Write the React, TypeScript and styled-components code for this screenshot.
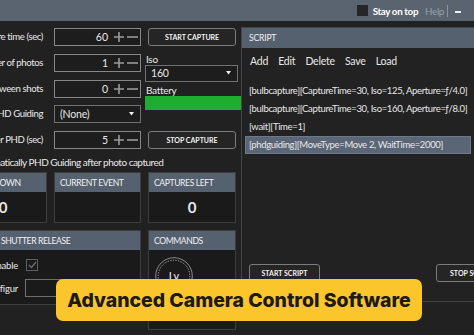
import styled, { createGlobalStyle } from 'styled-components';

const GlobalStyle = createGlobalStyle`
  html, body {
    margin: 0;
    padding: 0;
    background: #212121;
    overflow: hidden;
  }
  body {
    font-family: Lato, 'Open Sans', sans-serif;
    color: #e8e8e8;
  }
`;

const Window = styled.div`
  position: relative;
  width: 474px;
  height: 335px;
  overflow: hidden;
  background: #212121;
`;

const TitleBar = styled.div`
  height: 21px;
  background: #5a6470;
  display: flex;
  align-items: center;
  justify-content: flex-end;
  padding-right: 13px;
  font-size: 9.8px;
  letter-spacing: -0.35px;
`;

const TitleCheck = styled.span`
  width: 11px;
  height: 11px;
  background: #262626;
  margin-right: 5px;
`;

const StayText = styled.span`
  color: #ffffff;
  font-weight: 700;
  margin-right: 7px;
`;

const HelpText = styled.span`
  color: #949ea9;
`;

const Separator = styled.span`
  width: 1px;
  height: 12px;
  background: #8a949f;
  margin: 0 7px 0 3px;
`;

const Minimize = styled.span`
  width: 6px;
  height: 2px;
  background: #f0f0f0;
  margin-top: 2px;
`;

const Body = styled.div`
  display: flex;
  align-items: flex-start;
  padding-top: 6px;
`;

const LeftPane = styled.div`
  flex: none;
  width: 277px;
  margin-left: -41px;
  padding-top: 1px;
  display: flex;
  flex-direction: column;
`;

const FormGrid = styled.div`
  display: grid;
  grid-template-columns: 88px 87px 88px;
  grid-template-rows: repeat(5, 18px);
  column-gap: 7px;
  row-gap: 7.8px;
`;

const FieldLabel = styled.div`
  grid-column: 1;
  display: flex;
  justify-content: flex-end;
  padding-right: 4px;
  font-size: 9.6px;
  letter-spacing: -0.4px;
  line-height: 18px;
  white-space: nowrap;
`;

const NumberBox = styled.div`
  display: flex;
  align-items: center;
  border: 1px solid #868686;
  background: #1d1d1d;
  padding: 0 2px 0 6px;
`;

const NumberValue = styled.span`
  flex: 1;
  text-align: right;
  font-size: 10.5px;
  margin-right: 6px;
`;

const StepIcons = styled.span`
  display: flex;
  align-items: center;
  gap: 3px;
  color: #9a9a9a;
`;

const ActionButton = styled.button<{ $wide?: number }>`
  height: 18px;
  width: ${(p) => (p.$wide ? `${p.$wide}px` : 'auto')};
  border: 1px solid #7c7c7c;
  border-radius: 3px;
  background: #252525;
  color: #f2f2f2;
  font-family: Lato, sans-serif;
  font-weight: 700;
  font-size: 7px;
  text-transform: uppercase;
  padding: 0;
`;

const SelectBox = styled.div<{ $tall?: number }>`
  height: ${(p) => p.$tall ?? 17}px;
  box-sizing: border-box;
  border: 1px solid #717171;
  background: #1d1d1d;
  display: flex;
  align-items: center;
  justify-content: space-between;
  padding: 0 6px 0 5px;
  font-size: 10.5px;
  letter-spacing: -0.2px;
`;

const SideStack = styled.div`
  grid-column: 3;
  grid-row: 2 / 5;
  margin: 0 -5px 0 -3px;
  display: flex;
  flex-direction: column;
`;

const SmallLabel = styled.div`
  font-size: 10px;
  letter-spacing: -0.3px;
  line-height: 10px;
  padding-left: 1px;
`;

const IsoSelect = styled(SelectBox)`
  margin: 1px 3px 3px 0;
`;

const BatteryBar = styled.div`
  height: 14px;
  margin-top: 1px;
  background: #1eae2f;
`;

const AutoGuideLine = styled.div`
  font-size: 10px;
  letter-spacing: -0.5px;
  line-height: 14px;
  margin-top: 6px;
  padding-left: 14px;
  white-space: nowrap;
`;

const StatusRow = styled.div`
  display: grid;
  grid-template-columns: 88px 87px 88px;
  column-gap: 7px;
  margin-top: 3px;
`;

const LowerRow = styled.div`
  display: grid;
  grid-template-columns: 182px 88px;
  column-gap: 7px;
  align-items: start;
  margin-top: 7px;
`;

const Panel = styled.div<{ $tall: number }>`
  height: ${(p) => p.$tall}px;
  box-sizing: border-box;
  border: 1px solid #3d3d3d;
  display: flex;
  flex-direction: column;
  background: #1a1a1a;
`;

const PanelHeader = styled.div`
  flex: none;
  height: 19px;
  background: #56616f;
  font-size: 8.6px;
  letter-spacing: -0.4px;
  line-height: 20px;
  padding-left: 5px;
  text-transform: uppercase;
  color: #eef0f2;
  white-space: nowrap;
`;

const ValueBody = styled.div`
  flex: 1;
  display: flex;
  align-items: center;
  justify-content: center;
`;

const BigValue = styled.span`
  font-weight: 700;
  font-size: 15px;
`;

const ShutterBody = styled.div`
  display: grid;
  grid-template-columns: 58px 110px;
  column-gap: 8px;
  row-gap: 8px;
  align-items: center;
  padding-top: 9px;
`;

const ShutterLabel = styled.span`
  text-align: right;
  font-size: 9.5px;
  letter-spacing: -0.2px;
  white-space: nowrap;
`;

const CheckBox = styled.span`
  width: 12px;
  height: 12px;
  box-sizing: border-box;
  border: 1px solid #5e5e5e;
  display: flex;
  align-items: center;
  justify-content: center;
  color: #6f6f6f;
`;

const ConfigInput = styled.div`
  height: 18px;
  box-sizing: border-box;
  border: 1px solid #6e6e6e;
  margin-left: -1px;
`;

const CommandsBody = styled.div`
  padding: 7px 0 0 6px;
`;

const ScriptPanel = styled.div`
  flex: none;
  width: 274px;
  height: 275px;
  box-sizing: border-box;
  margin: 0 0 0 5px;
  border: 1px solid #454545;
  display: flex;
  flex-direction: column;
  background: #222222;
`;

const ScriptHeader = styled(PanelHeader)`
  height: 20px;
  font-size: 8.6px;
  letter-spacing: -0.2px;
  line-height: 21px;
  padding-left: 7px;
`;

const Toolbar = styled.div`
  display: flex;
  gap: 10px;
  padding: 6px 8px 0;
  font-size: 10.5px;
  letter-spacing: -0.2px;
  line-height: 14px;
`;

const ScriptList = styled.div`
  display: grid;
  width: max-content;
  margin: 14px 0 0 3px;
  font-size: 9.5px;
  letter-spacing: -0.34px;
`;

const ScriptItem = styled.div<{ $selected?: boolean }>`
  height: 18px;
  box-sizing: border-box;
  line-height: 16px;
  padding: 0 3px;
  white-space: nowrap;
  border: 1px solid ${(p) => (p.$selected ? '#6e7987' : 'transparent')};
  background: ${(p) => (p.$selected ? '#5a6575' : 'transparent')};
`;

const ScriptFooter = styled.div`
  margin-top: auto;
  display: flex;
  justify-content: space-between;
  padding: 0 7px 19px 7px;
`;

const Banner = styled.div`
  position: absolute;
  left: 56px;
  top: 279px;
  width: 366px;
  height: 42px;
  border-radius: 7px;
  background: #fbc62b;
  display: flex;
  align-items: center;
  justify-content: center;
  font-family: Inter, sans-serif;
  font-weight: 800;
  font-size: 19.4px;
  color: #1d1a12;
`;

const Plus = () => (
  <svg width="10" height="10" viewBox="0 0 10 10">
    <path d="M5 0v10M0 5h10" stroke="currentColor" strokeWidth="1.6" />
  </svg>
);

const Minus = () => (
  <svg width="11" height="10" viewBox="0 0 11 10">
    <path d="M0 5h11" stroke="currentColor" strokeWidth="1.6" />
  </svg>
);

const Caret = () => (
  <svg width="5" height="4" viewBox="0 0 5 4">
    <path d="M0 0h5L2.5 3.5z" fill="#f0f0f0" />
  </svg>
);

const Stepper = ({ value }: { value: string }) => (
  <NumberBox>
    <NumberValue>{value}</NumberValue>
    <StepIcons>
      <Plus />
      <Minus />
    </StepIcons>
  </NumberBox>
);

const LiveViewDial = () => (
  <svg width="38" height="38" viewBox="0 0 38 38">
    <circle cx="19" cy="19" r="18.3" fill="none" stroke="#8c8c8c" strokeWidth="1" />
    <circle cx="19" cy="19" r="15.8" fill="none" stroke="#b5b5b5" strokeWidth="1" strokeDasharray="1.2 1.4" />
    <text x="19" y="23" textAnchor="middle" fontSize="11" fill="#f0f0f0" fontFamily="Lato, sans-serif">
      Lv
    </text>
  </svg>
);

const scriptLines = [
  '[bulbcapture][CaptureTime=30, Iso=125, Aperture=ƒ/4.0]',
  '[bulbcapture][CaptureTime=30, Iso=160, Aperture=ƒ/8.0]',
  '[wait][Time=1]',
  '[phdguiding][MoveType=Move 2, WaitTime=2000]',
];

export default function App() {
  return (
    <Window>
      <GlobalStyle />
      <TitleBar>
        <TitleCheck />
        <StayText>Stay on top</StayText>
        <HelpText>Help</HelpText>
        <Separator />
        <Minimize />
      </TitleBar>
      <Body>
        <LeftPane>
          <FormGrid>
            <FieldLabel>Exposure time (sec)</FieldLabel>
            <Stepper value="60" />
            <ActionButton>Start Capture</ActionButton>

            <FieldLabel>Number of photos</FieldLabel>
            <Stepper value="1" />
            <SideStack>
              <SmallLabel>Iso</SmallLabel>
              <IsoSelect>
                <span>160</span>
                <Caret />
              </IsoSelect>
              <SmallLabel>Battery</SmallLabel>
              <BatteryBar />
            </SideStack>

            <FieldLabel>Delay between shots</FieldLabel>
            <Stepper value="0" />

            <FieldLabel>PHD Guiding</FieldLabel>
            <SelectBox $tall={18}>
              <span>(None)</span>
              <Caret />
            </SelectBox>

            <FieldLabel>Delay after PHD (sec)</FieldLabel>
            <Stepper value="5" />
            <ActionButton>Stop Capture</ActionButton>
          </FormGrid>

          <AutoGuideLine>Automatically PHD Guiding after photo captured</AutoGuideLine>

          <StatusRow>
            <Panel $tall={51}>
              <PanelHeader>Countdown</PanelHeader>
              <ValueBody>
                <BigValue>0</BigValue>
              </ValueBody>
            </Panel>
            <Panel $tall={51}>
              <PanelHeader>Current Event</PanelHeader>
              <ValueBody />
            </Panel>
            <Panel $tall={51}>
              <PanelHeader>Captures Left</PanelHeader>
              <ValueBody>
                <BigValue>0</BigValue>
              </ValueBody>
            </Panel>
          </StatusRow>

          <LowerRow>
            <Panel $tall={75}>
              <PanelHeader>Manual Shutter Release</PanelHeader>
              <ShutterBody>
                <ShutterLabel>Enable</ShutterLabel>
                <CheckBox>
                  <svg width="9" height="8" viewBox="0 0 9 8">
                    <path d="M1 4l2.5 2.5L8 1" fill="none" stroke="currentColor" strokeWidth="1.3" />
                  </svg>
                </CheckBox>
                <ShutterLabel>Configur</ShutterLabel>
                <ConfigInput />
              </ShutterBody>
            </Panel>
            <Panel $tall={100}>
              <PanelHeader>Commands</PanelHeader>
              <CommandsBody>
                <LiveViewDial />
              </CommandsBody>
            </Panel>
          </LowerRow>
        </LeftPane>

        <ScriptPanel>
          <ScriptHeader>Script</ScriptHeader>
          <Toolbar>
            <span>Add</span>
            <span>Edit</span>
            <span>Delete</span>
            <span>Save</span>
            <span>Load</span>
          </Toolbar>
          <ScriptList>
            {scriptLines.map((line, i) => (
              <ScriptItem key={line} $selected={i === scriptLines.length - 1}>
                {line}
              </ScriptItem>
            ))}
          </ScriptList>
          <ScriptFooter>
            <ActionButton $wide={71}>Start Script</ActionButton>
            <ActionButton $wide={71}>Stop Script</ActionButton>
          </ScriptFooter>
        </ScriptPanel>
      </Body>
      <Banner>Advanced Camera Control Software</Banner>
    </Window>
  );
}
